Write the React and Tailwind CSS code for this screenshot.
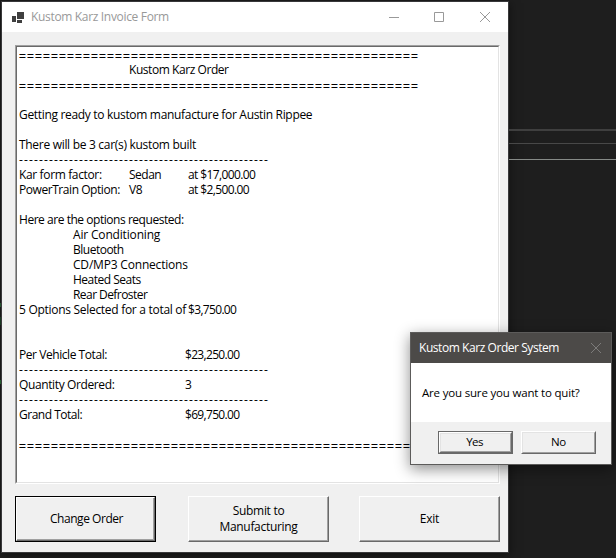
import React from 'react';

const EQUALS = '='.repeat(50);
const DASHES = '-'.repeat(50);

function Line({ children }) {
  return <div className="flex h-[15px] items-center leading-[15px]">{children}</div>;
}

function T({ children, className = '' }) {
  return <span className={`block whitespace-pre ${className}`}>{children}</span>;
}

function Equals() {
  return (
    <Line>
      <T className="mt-[3px] tracking-[1.14px] [-webkit-text-stroke:0.25px_#000]">{EQUALS}</T>
    </Line>
  );
}

function Dashes() {
  return (
    <Line>
      <T className="tracking-[1.14px]">{DASHES}</T>
    </Line>
  );
}

function Total({ children, value }) {
  return (
    <Line>
      <div className="w-[166px] shrink-0">{children}</div>
      <T className="tracking-[-0.68px]">{value}</T>
    </Line>
  );
}

function Button({ children, focused, className = '' }) {
  return (
    <button
      className={`flex items-center justify-center bg-[#f0f0f0] text-center text-black ${
        focused ? 'border border-black' : ''
      } ${className}`}
    >
      <span className="flex h-full w-full border border-t-white border-r-[#696969] border-b-[#696969] border-l-white">
        <span className="flex h-full w-full flex-col items-center justify-center border-r border-b border-[#a0a0a0] leading-4">
          {children}
        </span>
      </span>
    </button>
  );
}

function InvoiceWindow() {
  return (
    <div className="mt-px flex h-[552px] w-[508px] shrink-0 flex-col border border-[#38383a] bg-[#f0f0f0] shadow-[0_2px_10px_rgba(0,0,0,0.5)]">
      <div className="flex h-[30px] shrink-0 items-center bg-white pl-[10px]">
        <svg width="12" height="11" viewBox="0 0 12 11" fill="#3f3f3f" shapeRendering="crispEdges">
          <path d="M0 4h4v6H0zM5 0h7v7H5zM5 8h5v3H5z" />
        </svg>
        <T className="ml-[7px] tracking-[-0.33px] text-[#999]">Kustom Karz Invoice Form</T>
        <svg className="mr-[17px] ml-auto" width="102" height="10" viewBox="0 0 102 10" fill="none" stroke="#999">
          <path d="M0 5.5h10M45.5.5h9v9h-9zM91 0l10 10M101 0l-10 10" />
        </svg>
      </div>

      <div className="mt-[13px] mr-[8px] ml-[13px] h-[439px] border border-t-[#a0a0a0] border-r-white border-b-white border-l-[#a0a0a0]">
        <div className="h-full border border-t-[#696969] border-r-[#e3e3e3] border-b-[#e3e3e3] border-l-[#696969] bg-white pl-[2px] text-black">
          <Equals />
          <Line><T className="ml-[110px] tracking-[-0.44px]">Kustom Karz Order</T></Line>
          <Equals />
          <Line />
          <Line><T className="tracking-[-0.32px]">Getting ready to kustom manufacture for Austin Rippee</T></Line>
          <Line />
          <Line><T className="tracking-[-0.3px]">There will be 3 car(s) kustom built</T></Line>
          <Dashes />
          <Line>
            <div className="w-[110px]"><T className="tracking-[-0.36px]">Kar form factor:</T></div>
            <div className="w-[59px]"><T className="tracking-[-0.5px]">Sedan</T></div>
            <T className="tracking-[-0.62px]">at $17,000.00</T>
          </Line>
          <Line>
            <div className="w-[110px]"><T className="tracking-[-0.44px]">PowerTrain Option:</T></div>
            <div className="w-[59px]"><T className="tracking-[-0.5px]">V8</T></div>
            <T className="tracking-[-0.62px]">at $2,500.00</T>
          </Line>
          <Line />
          <Line><T className="tracking-[-0.46px]">Here are the options requested:</T></Line>
          <Line><T className="ml-[54px] tracking-[-0.17px]">Air Conditioning</T></Line>
          <Line><T className="ml-[54px] tracking-[-0.5px]">Bluetooth</T></Line>
          <Line><T className="ml-[54px] tracking-[-0.19px]">CD/MP3 Connections</T></Line>
          <Line><T className="ml-[54px] tracking-[-0.5px]">Heated Seats</T></Line>
          <Line><T className="ml-[54px] tracking-[-0.56px]">Rear Defroster</T></Line>
          <Line>
            <T className="w-[169px] tracking-[-0.29px]">5 Options Selected for a total of </T>
            <T className="tracking-[-0.67px]">$3,750.00</T>
          </Line>
          <Line />
          <Line />
          <Total value="$23,250.00"><T className="tracking-[-0.44px]">Per Vehicle Total:</T></Total>
          <Dashes />
          <Total value="3"><T className="tracking-[-0.38px]">Quantity Ordered:</T></Total>
          <Dashes />
          <Total value="$69,750.00"><T className="tracking-[-0.49px]">Grand Total:</T></Total>
          <Line />
          <Equals />
        </div>
      </div>

      <div className="mt-3 ml-[13px] flex">
        <Button focused className="h-[46px] w-[141px]"><T className="pt-px pl-[3px] tracking-[-0.45px]">Change Order</T></Button>
        <Button className="ml-8 h-[46px] w-[141px] tracking-[-0.3px]"><T className="pl-px">Submit to</T><T className="pl-px">Manufacturing</T></Button>
        <Button className="ml-[30px] h-[46px] w-[141px] tracking-[-0.25px]"><T className="pl-px">Exit</T></Button>
      </div>
    </div>
  );
}

function QuitDialog() {
  return (
    <div className="absolute top-[332px] left-[410px] flex h-[133px] w-[202px] flex-col border border-[#5c5b5a] bg-[#f0f0f0] shadow-[0_4px_14px_rgba(0,0,0,0.45)]">
      <div className="flex h-[30px] items-center bg-[#4c4a48] pl-2 text-white">
        <T className="tracking-[-0.44px]">Kustom Karz Order System</T>
        <svg className="mr-[10px] ml-auto" width="10" height="10" viewBox="0 0 10 10" fill="none" stroke="#7c7b7a">
          <path d="M0 0l10 10M10 0L0 10" />
        </svg>
      </div>
      <div className="flex h-[59px] items-center bg-white pl-[11px] text-[11.5px] text-black">
        <T className="tracking-[-0.18px]">Are you sure you want to quit?</T>
      </div>
      <div className="flex pt-[9px] pl-[27px] text-[11.5px] tracking-[-0.3px]">
        <button className="h-[23px] w-[75px] border border-[#696969]">
          <span className="flex h-full w-full border border-t-white border-r-[#696969] border-b-[#696969] border-l-white">
            <span className="flex h-full w-full items-center justify-center border border-t-[#e3e3e3] border-r-[#a0a0a0] border-b-[#a0a0a0] border-l-[#e3e3e3] leading-none">
              <T className="pb-px pr-0.5 tracking-[-0.6px]">Yes</T>
            </span>
          </span>
        </button>
        <button className="ml-2 h-[23px] w-[75px]">
          <span className="flex h-full w-full border border-t-white border-r-[#696969] border-b-[#696969] border-l-white">
            <span className="flex h-full w-full items-center justify-center border border-t-[#e3e3e3] border-r-[#a0a0a0] border-b-[#a0a0a0] border-l-[#e3e3e3] leading-none">
              <T className="pb-px">No</T>
            </span>
          </span>
        </button>
      </div>
    </div>
  );
}

export default function App() {
  return (
    <div className="relative flex h-[558px] w-[616px] overflow-hidden bg-[#1e1e1e] font-['Open_Sans','Noto_Sans',sans-serif] text-[12px]">
      <div className="w-px shrink-0 pt-[303px]">
        <div className="h-1 bg-[#2f6b3c]" />
        <div className="mt-[10px] h-2 bg-[#1f4a2a]" />
        <div className="mt-[55px] h-1 bg-[#2f7a3c]" />
      </div>
      <InvoiceWindow />
      <div className="flex flex-1 flex-col pt-[129px]">
        <div className="h-[2px] bg-[#3f3f3f]" />
        <div className="mt-3 h-px bg-[#484848]" />
        <div className="mt-[15px] h-px bg-[#868a87]" />
      </div>
      <QuitDialog />
    </div>
  );
}
